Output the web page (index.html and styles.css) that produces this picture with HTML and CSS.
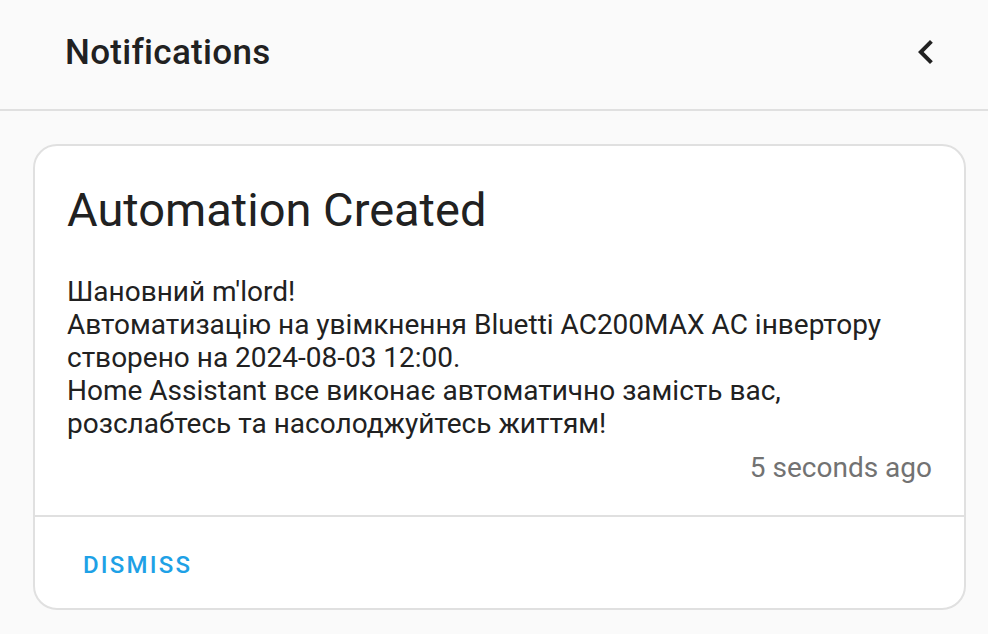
FILE: index.html
```html
<!DOCTYPE html>
<html>
<head>
<meta charset="utf-8">
<link rel="stylesheet" href="styles.css">
</head>
<body>
<div class="drawer">
  <header class="header">
    <div class="title">Notifications</div>
    <button class="back" aria-label="Close">
      <svg width="48" height="48" viewBox="0 0 24 24"><path d="M15.41 16.58L10.83 12l4.58-4.59L14 6l-6 6 6 6z" fill="#212121"/></svg>
    </button>
  </header>
  <div class="content">
    <div class="card">
      <div class="card-body">
        <h1 class="card-title">Automation Created</h1>
        <div class="message">Шановний m'lord!<br>Автоматизацію на увімкнення Bluetti AC200MAX AC інвертору<br>створено на 2024-08-03 12:00.<br>Home Assistant все виконає автоматично замість вас,<br>розслабтесь та насолоджуйтесь життям!</div>
        <div class="time">5 seconds ago</div>
      </div>
      <div class="card-actions">
        <button class="dismiss">DISMISS</button>
      </div>
    </div>
  </div>
</div>
</body>
</html>
```
FILE: styles.css
```css
html, body {
  margin: 0;
  padding: 0;
  background: #fafafa;
  font-family: Roboto, "Noto Sans", sans-serif;
  color: #212121;
}
.drawer {
  width: 988px;
  height: 634px;
  overflow: hidden;
}
.header {
  height: 109px;
  border-bottom: 2px solid #e0e0e0;
  display: flex;
  align-items: center;
  justify-content: space-between;
  padding: 0 38px 0 65px;
  box-sizing: content-box;
}
.title {
  font-size: 35px;
  font-weight: 500;
  letter-spacing: 0.3px;
  margin-top: -5px;
}
.back {
  border: none;
  background: none;
  padding: 0;
  width: 48px;
  height: 48px;
  margin-top: -5px;
}
.back svg { display: block; }
.content {
  padding: 33px 22px 0 33px;
}
.card {
  background: #fff;
  border: 2px solid #e0e0e0;
  border-radius: 24px;
  height: 466px;
  box-sizing: border-box;
  display: flex;
  flex-direction: column;
}
.card-body {
  padding: 32px 32px 0 32px;
  height: 371px;
  box-sizing: border-box;
  border-bottom: 2px solid #e0e0e0;
}
.card-title {
  margin: 0;
  font-size: 47px;
  font-weight: 400;
  line-height: 64px;
}
.message {
  margin-top: 33px;
  font-size: 28px;
  line-height: 33px;
}
.time {
  text-align: right;
  color: #727272;
  font-size: 28px;
  line-height: 33px;
  margin-top: 11px;
}
.card-actions {
  padding: 0 32px;
  flex: 1;
  display: flex;
  align-items: center;
}
.dismiss {
  border: none;
  background: none;
  padding: 0 16px;
  font-family: Roboto, sans-serif;
  font-size: 24px;
  font-weight: 500;
  letter-spacing: 2.2px;
  color: #1ea1e6;
  margin-top: 5px;
}
```
